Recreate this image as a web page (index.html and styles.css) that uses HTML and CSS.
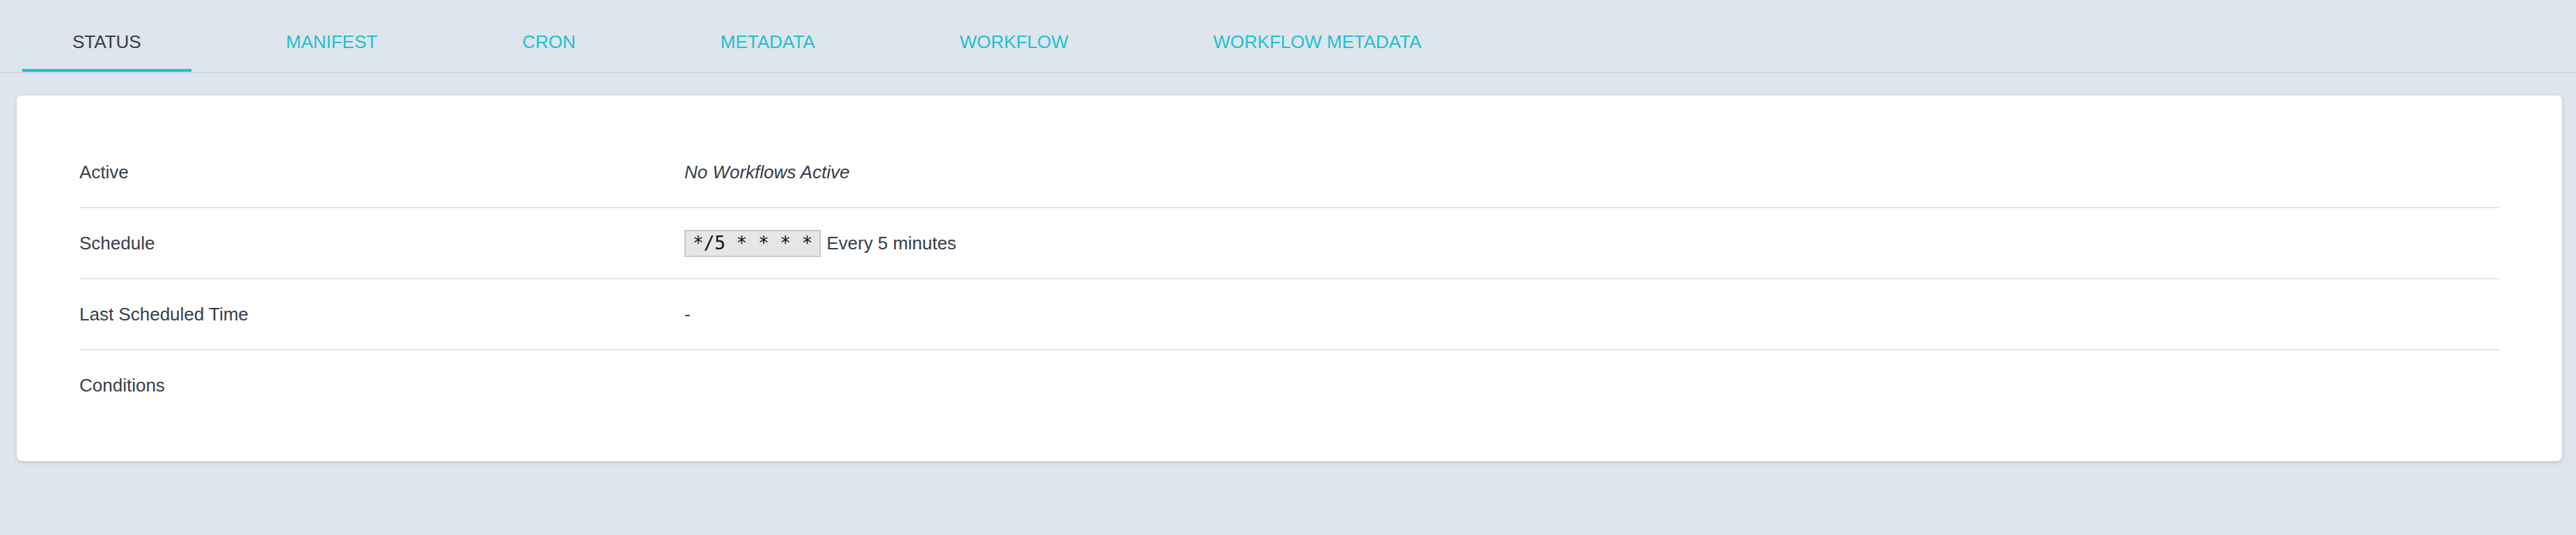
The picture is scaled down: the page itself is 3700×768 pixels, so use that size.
FILE: index.html
```html
<!DOCTYPE html>
<html lang="en">
<head>
<meta charset="utf-8">
<title>Status</title>
<link rel="stylesheet" href="styles.css">
</head>
<body>
  <nav class="tabs">
    <div class="tab tab-active">STATUS</div>
    <div class="tab">MANIFEST</div>
    <div class="tab">CRON</div>
    <div class="tab">METADATA</div>
    <div class="tab">WORKFLOW</div>
    <div class="tab">WORKFLOW METADATA</div>
  </nav>
  <main class="card">
    <div class="row">
      <div class="label">Active</div>
      <div class="value"><em class="muted">No Workflows Active</em></div>
    </div>
    <div class="row">
      <div class="label">Schedule</div>
      <div class="value"><code class="cron">*/5 * * * *</code><span class="cron-desc">Every 5 minutes</span></div>
    </div>
    <div class="row">
      <div class="label">Last Scheduled Time</div>
      <div class="value">-</div>
    </div>
    <div class="row">
      <div class="label">Conditions</div>
      <div class="value"></div>
    </div>
  </main>
</body>
</html>
```

FILE: styles.css
```css
html, body {
  margin: 0;
  padding: 0;
}

body {
  background: #dee5ec;
  font-family: "Liberation Sans", Arial, sans-serif;
  color: #363d4a;
  font-size: 26px;
  min-height: 768px;
}

.tabs {
  display: flex;
  gap: 64px;
  padding-left: 32px;
  border-bottom: 2px solid #ccd5dd;
  height: 103px;
}

.tab {
  box-sizing: border-box;
  height: 103px;
  padding: 45px 72px 0;
  line-height: 30px;
  font-size: 26px;
  color: #1fbfd1;
  border-bottom: 4px solid transparent;
  white-space: nowrap;
}

.tab-active {
  color: #363d4a;
  border-bottom-color: #1fbfd3;
}

.card {
  display: block;
  margin: 32px 20px 0 24px;
  background: #ffffff;
  border-radius: 8px;
  padding: 60px 90px 59px;
  box-shadow: 0 2px 6px rgba(40, 60, 80, 0.14), 0 1px 2px rgba(40, 60, 80, 0.10);
}

.row {
  display: grid;
  grid-template-columns: 25% 75%;
  align-items: center;
  height: 100px;
  border-bottom: 2px solid #e0e5ea;
}

.row:last-child {
  border-bottom: none;
}

.label,
.value {
  line-height: 36px;
  white-space: nowrap;
}

.muted {
  font-style: italic;
}

.cron {
  display: inline-block;
  font-family: "DejaVu Sans Mono", "Liberation Mono", monospace;
  font-size: 26px;
  line-height: 31px;
  color: #111111;
  background: #e6e6e6;
  border: 2px solid #c8c8c8;
  padding: 2px 10px;
  white-space: pre;
  vertical-align: middle;
}

.cron-desc {
  margin-left: 8px;
  vertical-align: middle;
}
```
